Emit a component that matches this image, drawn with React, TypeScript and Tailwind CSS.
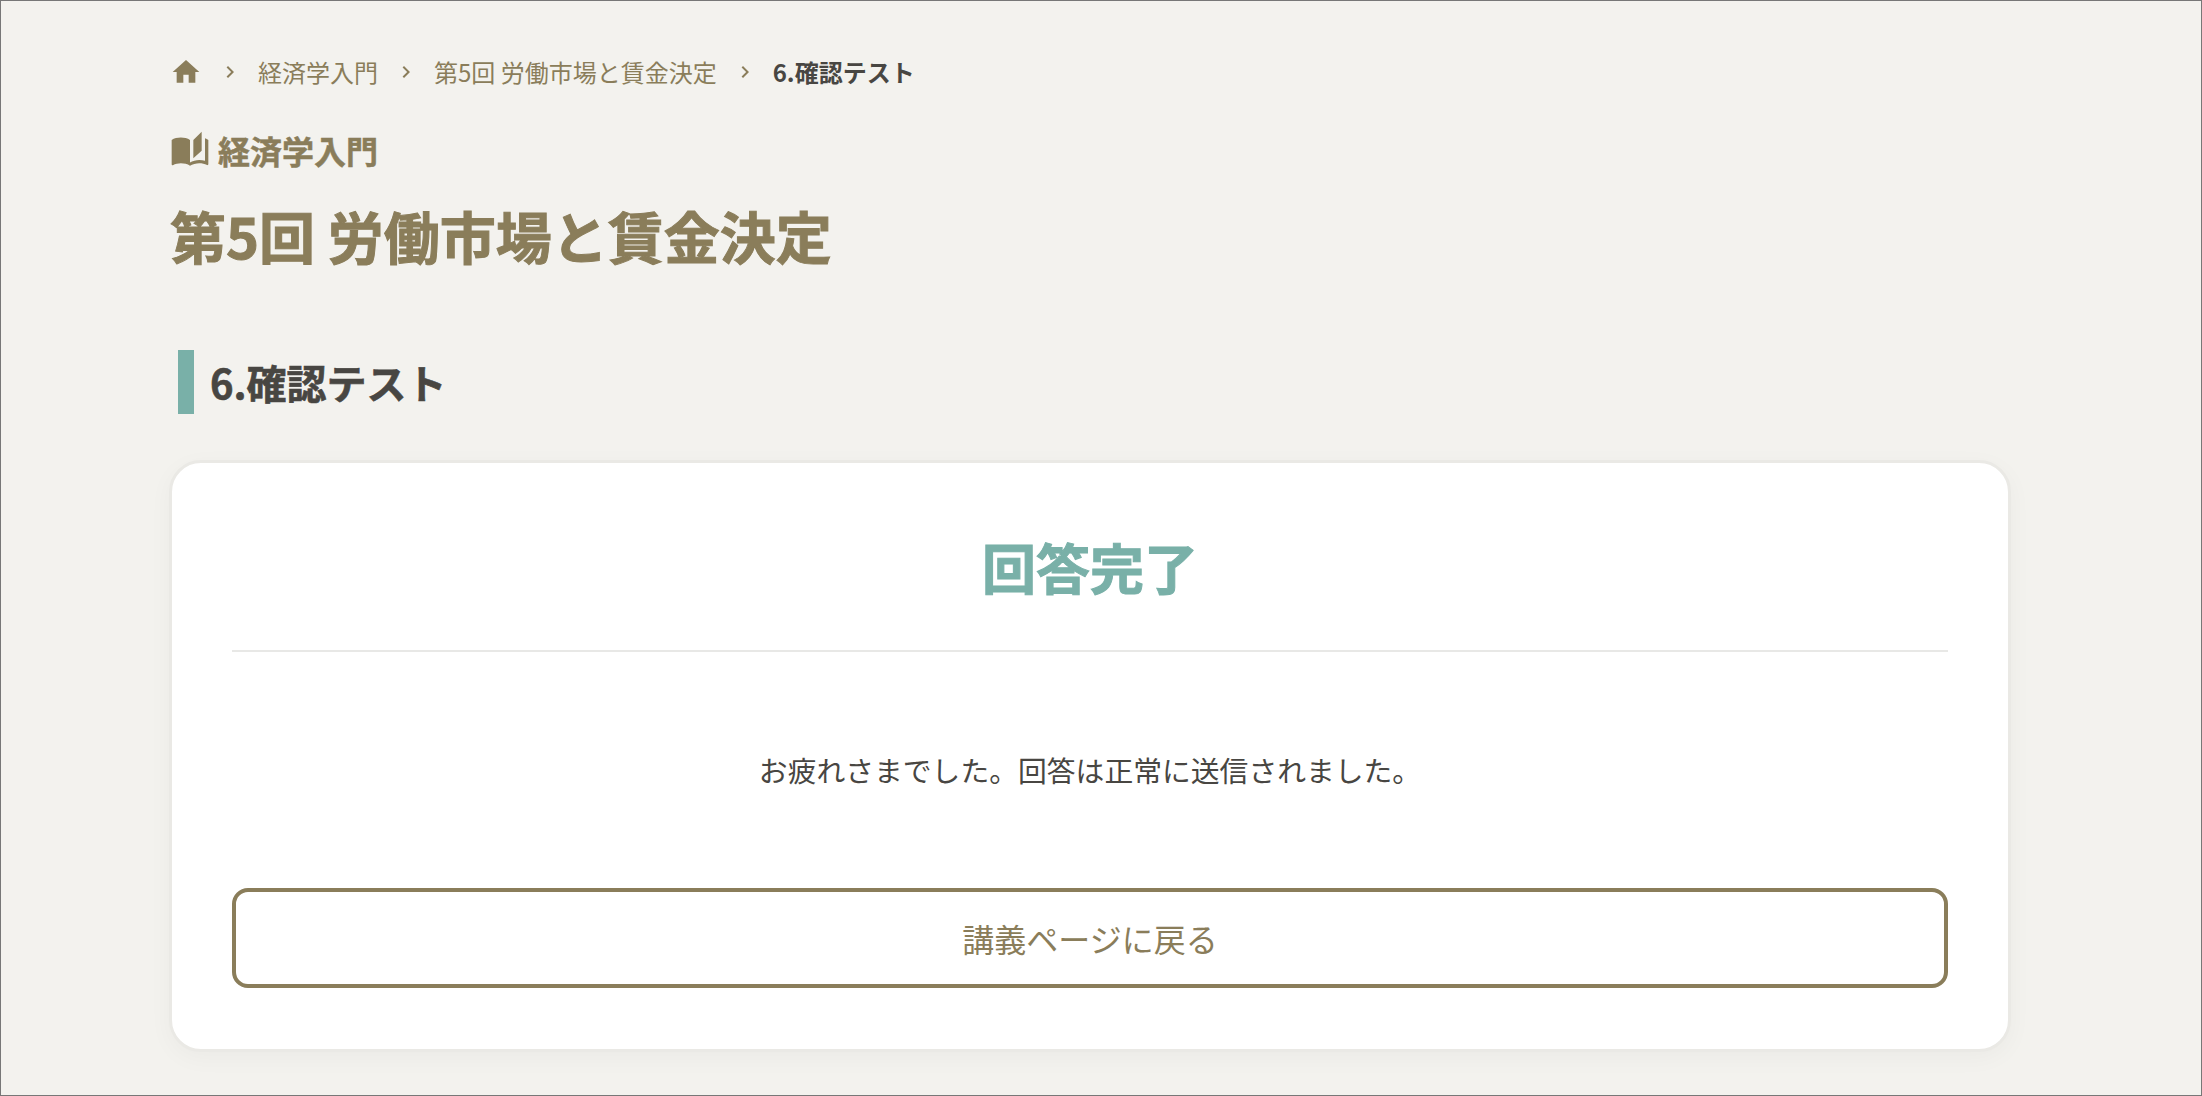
import React from "react";
import { MdAutoStories, MdChevronRight, MdHome } from "react-icons/md";

const Chevron = () => <MdChevronRight className="mx-4 shrink-0" size={24} />;

const App: React.FC = () => {
  return (
    <div
      className="w-[2202px] h-[1096px] overflow-hidden bg-[#f3f2ee] border border-[#777777] text-[#484642] pl-[169px] pr-[189px]"
      style={{ fontFamily: '"Noto Sans CJK JP", "Noto Sans", sans-serif' }}
    >
      {/* breadcrumb */}
      <nav className="flex items-center h-[36px] mt-[53px] text-[24px] text-[#8a7d5a]">
        <MdHome size={32} />
        <Chevron />
        <span>経済学入門</span>
        <Chevron />
        <span>第5回 労働市場と賃金決定</span>
        <Chevron />
        <span className="font-bold text-[#484642]">6.確認テスト</span>
      </nav>

      {/* course name */}
      <div className="flex items-center gap-2 mt-[38px] h-[44px] text-[32px] font-bold [-webkit-text-stroke:0.5px] text-[#8a7d5a]">
        <MdAutoStories size={40} />
        <span>経済学入門</span>
      </div>

      {/* title */}
      <h1 className="mt-[23px] text-[56px] leading-[80px] font-bold [-webkit-text-stroke:1px] text-[#8a7d5a]">第5回 労働市場と賃金決定</h1>

      {/* section heading */}
      <div className="flex items-center mt-[75px] ml-[8px] h-[64px]">
        <div className="w-[16px] h-[64px] bg-[#79b0a8]" />
        <h2 className="ml-[16px] text-[40px] font-bold [-webkit-text-stroke:0.6px]">6.確認テスト</h2>
      </div>

      {/* card */}
      <div className="mt-[46px] -ml-[1px] w-[1842px] h-[592px] bg-white border-[3px] border-[#eae9e5] rounded-[32px] shadow-[0_6px_24px_rgba(0,0,0,0.035)] px-[60px] pt-[64px]">
        <h3 className="text-center text-[54px] leading-[80px] font-bold [-webkit-text-stroke:1px] text-[#79b0a8]">回答完了</h3>
        <div className="mt-[43px] border-t-2 border-[#e8e8e6]" />
        <p className="mt-[98px] text-center text-[28.8px] leading-[40px]">お疲れさまでした。回答は正常に送信されました。</p>
        <button className="mt-[98px] w-full h-[100px] border-[4px] border-[#8a7d5a] rounded-[16px] text-[32px] text-[#8a7d5a] bg-white">
          講義ページに戻る
        </button>
      </div>
    </div>
  );
};

export default App;
